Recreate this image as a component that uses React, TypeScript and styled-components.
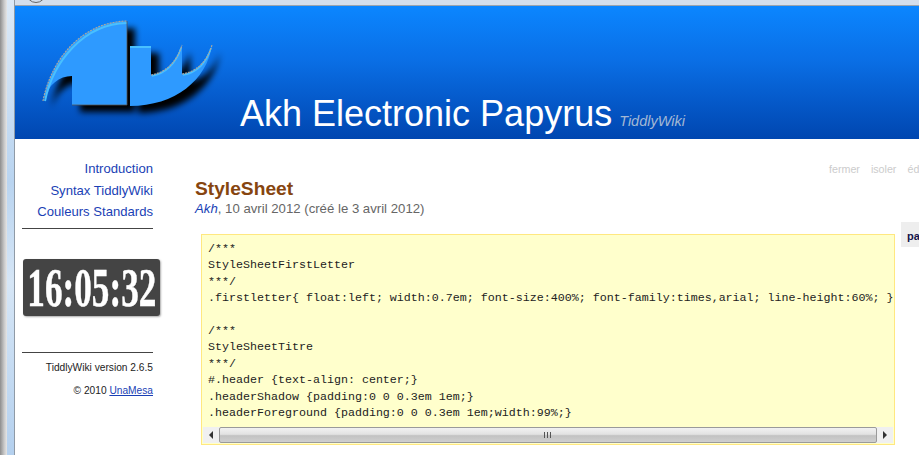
import * as React from "react";
import styled, { createGlobalStyle } from "styled-components";

const GlobalStyle = createGlobalStyle`
  html, body {
    margin: 0;
    padding: 0;
    width: 919px;
    height: 455px;
    overflow: hidden;
    background: #fff;
    font-family: "Liberation Sans", Arial, sans-serif;
  }
`;

const Frame = styled.div`
  display: flex;
  width: 919px;
  height: 455px;
  overflow: hidden;
`;

const WindowEdge = styled.div`
  flex: 0 0 15px;
  display: flex;
  background: #fff;

  .shade {
    width: 7px;
    background: linear-gradient(90deg, #8d8d8d, #c9c9c9 60%, #e6e6e6);
  }

  .glass {
    width: 7px;
    background: linear-gradient(180deg, #dce9f6, #b9d4f0 40%, #d6e6f6 62%, #b4d0ee);
    border-right: 1px solid #8f9aa6;
  }
`;

const Page = styled.div`
  flex: 1;
  min-width: 0;
  display: flex;
  flex-direction: column;
`;

const WindowTop = styled.div`
  position: relative;
  flex: 0 0 5px;
  background: #d3deec;
  border-bottom: 1px solid #9aa3ad;

  &::after {
    content: "";
    position: absolute;
    left: 11px;
    top: -17px;
    width: 18px;
    height: 18px;
    border: 1px solid #666;
    border-radius: 50%;
  }
`;

const Header = styled.header`
  position: relative;
  box-sizing: border-box;
  flex: 0 0 133px;
  display: flex;
  align-items: baseline;
  padding: 88px 0 0 225px;
  background: linear-gradient(180deg, #0b86ff 0%, #0a6fe6 40%, #0046b0 100%);
  color: #fff;
`;

const LogoMark = styled.svg`
  position: absolute;
  left: 0;
  top: 0;
`;

const SiteTitle = styled.span`
  position: relative;
  font-size: 36px;
  line-height: 40px;
  white-space: nowrap;
`;

const SiteSubtitle = styled.span`
  position: relative;
  margin-left: 7px;
  font-size: 14.5px;
  font-style: italic;
  color: #a3b8d4;
  white-space: nowrap;
`;

const Columns = styled.div`
  flex: 1;
  min-height: 0;
  display: flex;
`;

const Sidebar = styled.aside`
  flex: 0 0 131px;
  min-width: 0;
  margin-left: 7px;
  padding-top: 19px;
  text-align: right;
`;

const MenuLink = styled.a`
  display: block;
  font-size: 13.1px;
  line-height: 21.5px;
  color: #1a3fb5;
`;

const Rule = styled.hr`
  margin: ${(p: { $top: number }) => p.$top}px 0 0;
  border: 0;
  border-top: 1px solid #444;
`;

const Clock = styled.div`
  width: 137px;
  height: 57px;
  margin: 30px 0 0 1px;
  display: flex;
  align-items: center;
  justify-content: center;
  background: #444;
  border-radius: 3px;
  box-shadow: 1px 1px 2px #aaa;
  overflow: hidden;

  span {
    display: inline-block;
    font-family: "Liberation Serif", "Times New Roman", serif;
    font-weight: bold;
    font-size: 55px;
    line-height: 57px;
    color: #fff;
    -webkit-text-stroke: 0.5px #fff;
    white-space: nowrap;
    transform: scaleX(0.64);
  }
`;

const SmallPrint = styled.div`
  font-size: 10.2px;
  color: #222;
  line-height: 13px;
  margin-top: ${(p: { $top: number }) => p.$top}px;

  a {
    color: #1a3fb5;
    text-decoration: underline;
  }
`;

const Main = styled.main`
  flex: 1;
  min-width: 0;
  padding: 24px 0 0 42px;
  overflow: hidden;
`;

const Toolbar = styled.div`
  display: flex;
  gap: 11px;
  padding-left: 634px;
  height: 13px;
  font-size: 10.7px;
  line-height: 13px;
  color: #ccc;
  white-space: nowrap;
`;

const TiddlerTitle = styled.h1`
  margin: 1px 0 0;
  font-size: 19.2px;
  line-height: 24px;
  font-weight: bold;
  color: #86450f;
`;

const Subtitle = styled.div`
  font-size: 13.2px;
  line-height: 15px;
  color: #666;

  em {
    color: #1a3fb5;
  }
`;

const BodyRow = styled.div`
  display: flex;
  align-items: flex-start;
  margin: 6px 0 0 6px;
`;

const CodeBox = styled.div`
  flex: 0 0 694px;
  margin-top: 12px;
  box-sizing: border-box;
  height: 211px;
  display: flex;
  flex-direction: column;
  background: #ffffcc;
  border: 1px solid #ffe880;
`;

const Code = styled.pre`
  flex: 1;
  margin: 0;
  padding: 6px 0 0 6px;
  overflow: hidden;
  font-family: "Liberation Mono", "Courier New", monospace;
  font-size: 11.67px;
  line-height: 16.4px;
  color: #222;
`;

const ScrollBar = styled.div`
  flex: 0 0 16px;
  margin: 0 1px 1px;
  display: flex;
  background: #f0f0f0;
`;

const ScrollArrow = styled.div`
  flex: 0 0 16px;
  display: flex;
  align-items: center;
  justify-content: center;

  &::before {
    content: "";
    border-style: solid;
    border-width: 4px ${(p: { $dir: string }) => (p.$dir === "right" ? "0" : "4px")} 4px
      ${(p: { $dir: string }) => (p.$dir === "right" ? "4px" : "0")};
    border-color: transparent #333;
  }
`;

const ScrollThumb = styled.div`
  flex: 1;
  box-sizing: border-box;
  display: flex;
  align-items: center;
  justify-content: center;
  gap: 1px;
  border: 1px solid #9a9a9a;
  border-radius: 2px;
  background: linear-gradient(180deg, #f2f2f2, #e2e2e2 45%, #c2c2c2 55%, #cfcfcf);

  i {
    width: 1px;
    height: 6px;
    margin-right: 1px;
    background: #555;
  }
`;

const SideTab = styled.div`
  flex: 0 0 auto;
  margin-left: 6px;
  width: 30px;
  height: 25px;
  padding-left: 6px;
  background: #eee;
  font-size: 11px;
  font-weight: bold;
  line-height: 29px;
  color: #14144b;
  white-space: nowrap;
`;

const codeText = `/***
StyleSheetFirstLetter
***/
.firstletter{ float:left; width:0.7em; font-size:400%; font-family:times,arial; line-height:60%; }

/***
StyleSheetTitre
***/
#.header {text-align: center;}
.headerShadow {padding:0 0 0.3em 1em;}
.headerForeground {padding:0 0 0.3em 1em;width:99%;}`;

const logoBig = "M28 101 C36 60 66 22 112 21 L112 105 L57 105 L57 76 C44 76 34 84 28 101 Z";
const logoSmall =
  "M115 46 L136 46 L136 75 C150 73 162 62 167 45 L167 74 C181 72 192 62 197 45 C192 80 160 106 115 106 Z";

const Logo = () => (
  <LogoMark width="225" height="133" viewBox="0 0 225 133">
    <defs>
      <filter id="logoBlur" x="-20%" y="-20%" width="140%" height="140%">
        <feGaussianBlur stdDeviation="3" />
      </filter>
    </defs>
    <g transform="translate(0 -6)">
      <g filter="url(#logoBlur)" transform="translate(8 7)" fill="#000">
        <path d={logoBig} />
        <path d={logoSmall} />
      </g>
      <path d={logoBig} fill="#2e9aff" />
      <path d={logoSmall} fill="#2e9aff" />
      <path d="M29 100 C37 61 67 23 111 22" fill="none" stroke="#48c0ff" strokeWidth="2" transform="translate(1 1)" />
      <path d="M137 75 C150 73 161 63 166 47" fill="none" stroke="#48c0ff" strokeWidth="1.5" transform="translate(0 1)" />
      <path d="M168 74 C181 72 191 63 196 47" fill="none" stroke="#48c0ff" strokeWidth="1.5" transform="translate(0 1)" />
      <path d="M115 47 H136" stroke="#48c0ff" strokeWidth="2" />
      <path d="M28 101 C36 60 66 22 112 21" fill="none" stroke="#a8a8a0" strokeWidth="1.2" strokeDasharray="2 1" />
      <path d="M136 75 C150 73 162 62 167 45" fill="none" stroke="#a8a8a0" strokeWidth="1.2" strokeDasharray="2 1" />
      <path d="M167 74 C181 72 192 62 197 45" fill="none" stroke="#a8a8a0" strokeWidth="1.2" strokeDasharray="2 1" />
      <path d="M112 21 V105 H57" fill="none" stroke="#555" strokeWidth="0.8" />
    </g>
  </LogoMark>
);

const App = () => (
  <Frame>
    <GlobalStyle />
    <WindowEdge>
      <div className="shade" />
      <div className="glass" />
    </WindowEdge>
    <Page>
      <WindowTop />
      <Header>
        <Logo />
        <SiteTitle>Akh Electronic Papyrus</SiteTitle>
        <SiteSubtitle>TiddlyWiki</SiteSubtitle>
      </Header>
      <Columns>
        <Sidebar>
          <MenuLink>Introduction</MenuLink>
          <MenuLink>Syntax TiddlyWiki</MenuLink>
          <MenuLink>Couleurs Standards</MenuLink>
          <Rule $top={5} />
          <Clock>
            <span>16:05:32</span>
          </Clock>
          <Rule $top={36} />
          <SmallPrint $top={8}>TiddlyWiki version 2.6.5</SmallPrint>
          <SmallPrint $top={10}>
            © 2010 <a>UnaMesa</a>
          </SmallPrint>
        </Sidebar>
        <Main>
          <Toolbar>
            <span>fermer</span>
            <span>isoler</span>
            <span>éditer</span>
          </Toolbar>
          <TiddlerTitle>StyleSheet</TiddlerTitle>
          <Subtitle>
            <em>Akh</em>, 10 avril 2012 (créé le 3 avril 2012)
          </Subtitle>
          <BodyRow>
            <CodeBox>
              <Code>{codeText}</Code>
              <ScrollBar>
                <ScrollArrow $dir="left" />
                <ScrollThumb>
                  <i />
                  <i />
                  <i />
                </ScrollThumb>
                <ScrollArrow $dir="right" />
              </ScrollBar>
            </CodeBox>
            <SideTab>paramètres</SideTab>
          </BodyRow>
        </Main>
      </Columns>
    </Page>
  </Frame>
);

export default App;
